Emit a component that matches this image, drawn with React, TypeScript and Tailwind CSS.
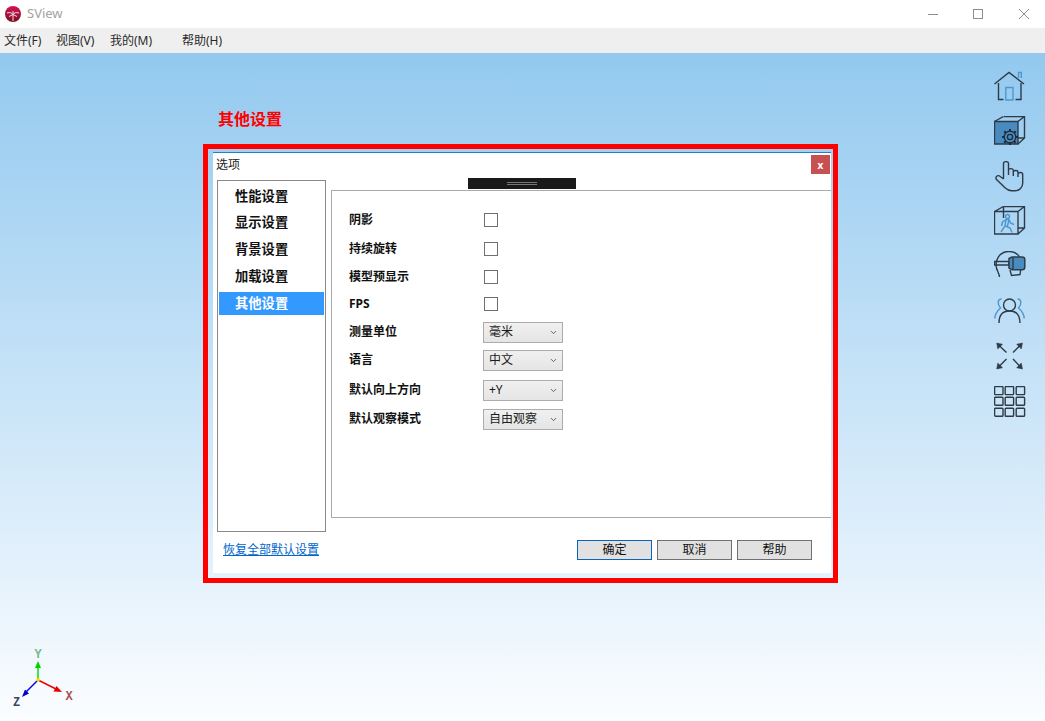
import { ChevronDown } from "lucide-react";

const DARK = "#2e3b47";
const BLUE = "#4f97cf";

function Box({ children }: { children: React.ReactNode }) {
  return (
    <svg width="32" height="32" viewBox="0 0 32 32" fill="none" stroke={DARK} strokeWidth="1.4" className="block">
      {children}
    </svg>
  );
}

function HomeIcon() {
  return (
    <Box>
      <path d="M0.5 13 L15 1.5 L30 13" />
      <path d="M4.5 12 V28.5 H9.5 M27 12 V28.5 H21.5" />
      <path d="M11.8 16.5 H19 V29 H11.8 Z" stroke={BLUE} />
      <path d="M24.5 7 V1.5 H27.3 V7" stroke={BLUE} />
    </Box>
  );
}

function GearCubeIcon() {
  return (
    <Box>
      <path d="M0.5 5.5 H24 V28 H0.5 Z" fill="#4a8bbf" />
      <path d="M9.5 0.5 H30.5 V22 L24 28 M0.5 5.5 L9.5 0.5 M24 5.5 L30.5 0.5 M24 22 H30.5" />
      <g stroke="#1e2a35" strokeWidth="1.3">
        <circle cx="16" cy="21" r="5.8" />
        <circle cx="16" cy="21" r="2.6" />
        <path d="M16 13 V15.4 M16 26.6 V29 M8 21 H10.4 M21.6 21 H24 M10.3 15.3 L12 17 M20 25 L21.7 26.7 M21.7 15.3 L20 17 M12 25 L10.3 26.7" strokeWidth="2" />
      </g>
    </Box>
  );
}

function HandIcon() {
  return (
    <Box>
      <path d="M9.5 18 V2.5 C9.5 0 14.5 0 14.5 2.5 V14 M14.5 14 V9.5 C14.5 7 19.3 7 19.3 9.5 V15 M19.3 15 V11 C19.3 9 24 9 24 11 V16 M24 16 V13 C24 11 28.7 11 28.7 13.5 V22 C28.7 26.5 25.5 29.8 21 29.8 H17.5 C14.5 29.8 13 28.7 11 26.8 L2.5 18.5 C1 16.5 2.8 14 5.3 14.8 L9.5 18" />
    </Box>
  );
}

function WalkCubeIcon() {
  return (
    <Box>
      <path d="M0.5 5.5 H24 V28 H0.5 Z M9.5 0.5 H30.5 V22 H24 M9.5 0.5 V12 M0.5 5.5 L9.5 0.5 M24 5.5 L30.5 0.5 M24 28 L30.5 22" />
      <g stroke={BLUE} strokeWidth="1.5">
        <circle cx="13.5" cy="10.5" r="2" />
        <path d="M12 13.5 L8.5 16 L7.5 20 M12 13.5 H15 L16.5 17 L20 18.5 M12 13.5 L11 20 L7 26 M11.5 20 L16 22 L18 26.5 M15 13.5 L13.5 20" />
      </g>
    </Box>
  );
}

function VrIcon() {
  return (
    <Box>
      <path d="M3 19 C0 10 5 0.5 15 0.5 C20 0.5 23.5 2.5 25.5 6" />
      <path d="M3 18 C3.5 21 5 22 5.5 26" />
      <path d="M16 19 L17.5 24.5 L26 23.5 L27 16.5 M23 17 H27" />
      <path d="M0.5 10.5 H15 V14 H0.5 Z" strokeWidth="1.6" />
      <path d="M15 7.5 L18 6 H28 C30 6 30.8 7 30.8 8.5 V16 C30.8 18 30 18.8 28 18.8 H18 L15 17 Z" fill="#4a8bbf" strokeWidth="1.5" />
      <path d="M19 6.5 V18.5" />
    </Box>
  );
}

function PeopleIcon() {
  return (
    <Box>
      <circle cx="15.5" cy="9" r="6" />
      <path d="M5 27 C5 18 10 15 15.5 15 C21 15 26 18 26 27" />
      <path d="M7.5 3 C3.5 3 3 8 6.5 12 C3 15 1 18 0.8 22.5" stroke={BLUE} />
      <path d="M23.5 3 C27.5 3 28 8 24.5 12 C28 15 30 18 30.2 22.5" stroke={BLUE} />
    </Box>
  );
}

function ArrowsIcon() {
  return (
    <Box>
      <path d="M12.5 11.5 L3.5 3 M19 11.5 L27.5 3 M12.5 18 L3.5 27 M19 18 L27.5 27" />
      <path d="M2.7 2 L8.5 3.2 L3.8 8 Z M28.5 2 L22.7 3.2 L27.3 8 Z M2.7 28 L3.8 22 L8.5 26.8 Z M28.5 28 L27.3 22 L22.7 26.8 Z" fill={DARK} strokeWidth="0.5" />
    </Box>
  );
}

function GridIcon() {
  const xs = [0.6, 11.2, 22.2];
  return (
    <Box>
      {xs.map((x) =>
        xs.map((y) => <rect key={`${x}-${y}`} x={x} y={y} width="8.4" height="8" rx="0.8" />),
      )}
    </Box>
  );
}

function Logo() {
  return (
    <svg width="16" height="16" viewBox="0 0 16 16" className="ml-[5px] shrink-0">
      <defs>
        <linearGradient id="lg" x1="0" y1="0" x2="0" y2="1">
          <stop offset="0" stopColor="#d4145a" />
          <stop offset="1" stopColor="#7a1020" />
        </linearGradient>
      </defs>
      <circle cx="8" cy="8" r="8" fill="url(#lg)" />
      <path d="M8 5 V15 M2 7 C5 6 7 7 8 8.5 C9 7 11 6 14 7 M4 10.5 L8 8.5 L12 10.5" stroke="#f4dfe0" strokeWidth="1" fill="none" />
    </svg>
  );
}

function Check() {
  return <div className="ml-[135px] h-[14px] w-[14px] border border-[#6f6f6f] bg-white" />;
}

function Combo({ text }: { text: string }) {
  return (
    <div className="ml-[134px] flex h-[21px] w-[80px] items-center justify-between border border-[#acacac] bg-gradient-to-b from-[#f0f0f0] to-[#e5e5e5] pl-[5px] pr-[4px] text-[12px] leading-none text-[#1a1a1a]">
      <span>{text}</span>
      <ChevronDown size={9} strokeWidth={2.4} color="#555" />
    </div>
  );
}

const rows: { label: string; cls: string; ctl: React.ReactNode }[] = [
  { label: "阴影", cls: "mt-[18px]", ctl: <Check /> },
  { label: "持续旋转", cls: "mt-[7px]", ctl: <Check /> },
  { label: "模型预显示", cls: "mt-[6px]", ctl: <Check /> },
  { label: "FPS", cls: "mt-[5px]", ctl: <Check /> },
  { label: "测量单位", cls: "mt-[6px]", ctl: <Combo text="毫米" /> },
  { label: "语言", cls: "mt-[6px]", ctl: <Combo text="中文" /> },
  { label: "默认向上方向", cls: "mt-[8px]", ctl: <Combo text="+Y" /> },
  { label: "默认观察模式", cls: "mt-[7px]", ctl: <Combo text="自由观察" /> },
];

const items = ["性能设置", "显示设置", "背景设置", "加载设置", "其他设置"];

function Btn({ text, primary }: { text: string; primary?: boolean }) {
  return (
    <div
      className={`flex h-[20px] w-[75px] items-center justify-center border bg-[#e1e1e1] text-[12px] leading-none text-[#111] ${
        primary ? "border-[#0a64b8]" : "border-[#707070]"
      }`}
    >
      {text}
    </div>
  );
}

function Axis() {
  return (
    <svg width="80" height="70" viewBox="0 0 80 70" className="absolute bottom-[9px] left-0">
      <line x1="38" y1="38" x2="38" y2="25" stroke="#00e000" strokeWidth="1.5" />
      <path d="M38 19 L41 26 H35 Z" fill="#00d000" />
      <line x1="38" y1="38" x2="56" y2="47" stroke="#f00000" strokeWidth="1.5" />
      <path d="M62 50 L53.5 49.5 L56.5 44 Z" fill="#e80000" />
      <line x1="38" y1="38" x2="26" y2="50" stroke="#0000e8" strokeWidth="1.5" />
      <path d="M22 55 L25 47.5 L29 51.5 Z" fill="#0000d0" />
      <circle cx="38" cy="38" r="1.8" fill="#f0e000" />
      <text x="38" y="16" fontSize="12" fontWeight="700" textAnchor="middle" fill="#74b98c" fontFamily="Liberation Mono, monospace">
        Y
      </text>
      <text x="69" y="58" fontSize="12" fontWeight="700" textAnchor="middle" fill="#a8504e" fontFamily="Liberation Mono, monospace">
        X
      </text>
      <text x="16.5" y="64" fontSize="12" fontWeight="700" textAnchor="middle" fill="#3a4468" fontFamily="Liberation Mono, monospace">
        Z
      </text>
    </svg>
  );
}

export default function App() {
  return (
    <div className="flex h-[721px] w-[1045px] flex-col overflow-hidden bg-white font-['Noto_Sans','Noto_Sans_CJK_SC',sans-serif]">
      {/* title bar */}
      <div className="flex h-[28px] shrink-0 items-center bg-white">
        <Logo />
        <span className="ml-[6px] text-[13px] text-[#a3a3a3]">SView</span>
        <div className="ml-auto flex items-center">
          <div className="mr-[35px] h-px w-[10px] bg-[#8c8c8c]" />
          <div className="mr-[36px] h-[10px] w-[10px] border border-[#8c8c8c]" />
          <svg width="10" height="10" viewBox="0 0 10 10" className="mr-[16px]">
            <path d="M0 0 L10 10 M10 0 L0 10" stroke="#8c8c8c" strokeWidth="1" />
          </svg>
        </div>
      </div>

      {/* menu bar */}
      <div className="flex h-[25px] shrink-0 items-center bg-[#efefef] pl-[4px] pt-px text-[12px] text-[#2a2a2a]">
        <span className="w-[52px]">文件(F)</span>
        <span className="w-[54px]">视图(V)</span>
        <span className="w-[72px]">我的(M)</span>
        <span>帮助(H)</span>
      </div>

      {/* viewport */}
      <div className="relative flex-1 bg-gradient-to-b from-[#93c9ef] to-[#fbfdff] pl-[203px] pt-[55px]">
        <div className="mb-[14px] ml-[15px] h-[22px] text-[16px] font-bold leading-[22px] text-[#ff0000]">其他设置</div>

        {/* highlight frame */}
        <div className="h-[439px] w-[635px] border-[5px] border-[#ff0000] pb-[5px] pl-[5px] pr-[2px] pt-[3px]">
          {/* dialog */}
          <div className="flex h-full flex-col border-t border-[#1f80d0] bg-white">
            <div className="flex h-[27px] shrink-0 items-start justify-between">
              <span className="ml-[3px] mt-[3px] text-[12px] leading-[18px] text-[#222]">选项</span>
              <div className="mr-px mt-[2px] flex h-[19px] w-[19px] items-center justify-center bg-[#c75050] text-[10px] font-bold leading-none text-white">
                x
              </div>
            </div>

            <div className="flex h-[352px] shrink-0">
              {/* nav list */}
              <div className="ml-[4px] h-[352px] w-[109px] shrink-0 border border-[#8a8a8a] px-px pt-[3px]">
                {items.map((t, i) => (
                  <div
                    key={t}
                    className={`flex h-[23px] items-center pl-[16px] text-[13.3px] font-bold leading-none ${
                      i === 0 ? "mb-[3px] mt-px" : "mb-[4px]"
                    } ${i === 4 ? "bg-[#3399ff] text-white" : "text-[#111]"}`}
                  >
                    {t}
                  </div>
                ))}
              </div>

              {/* right pane */}
              <div className="ml-[5px] flex min-w-0 flex-1 flex-col">
                <div className="relative z-10 -mt-[2px] ml-[137px] flex h-[11px] w-[108px] shrink-0 flex-col items-center justify-center gap-px bg-[#1a1a1a]">
                  <div className="h-px w-[30px] bg-[#777]" />
                  <div className="h-px w-[30px] bg-[#777]" />
                </div>
                <div className="mt-px h-[328px] border-y border-l border-[#aaaaaa] pl-[17px]">
                  {rows.map((r) => (
                    <div key={r.label} className={`relative flex h-[22px] items-center ${r.cls}`}>
                      <span className="absolute left-0 text-[12px] font-bold leading-none text-[#111]">{r.label}</span>
                      {r.ctl}
                    </div>
                  ))}
                </div>
              </div>
            </div>

            {/* footer */}
            <div className="flex items-center justify-between pl-[10px] pr-[19px] pt-[8px]">
              <span className="text-[12px] leading-[20px] text-[#0066cc] underline">恢复全部默认设置</span>
              <div className="flex gap-[5px]">
                <Btn text="确定" primary />
                <Btn text="取消" />
                <Btn text="帮助" />
              </div>
            </div>
          </div>
        </div>

        {/* right toolbar */}
        <div className="absolute left-[994px] top-[18px] flex flex-col gap-[13px]">
          <HomeIcon />
          <GearCubeIcon />
          <HandIcon />
          <WalkCubeIcon />
          <VrIcon />
          <PeopleIcon />
          <ArrowsIcon />
          <GridIcon />
        </div>

        <Axis />
      </div>
    </div>
  );
}
